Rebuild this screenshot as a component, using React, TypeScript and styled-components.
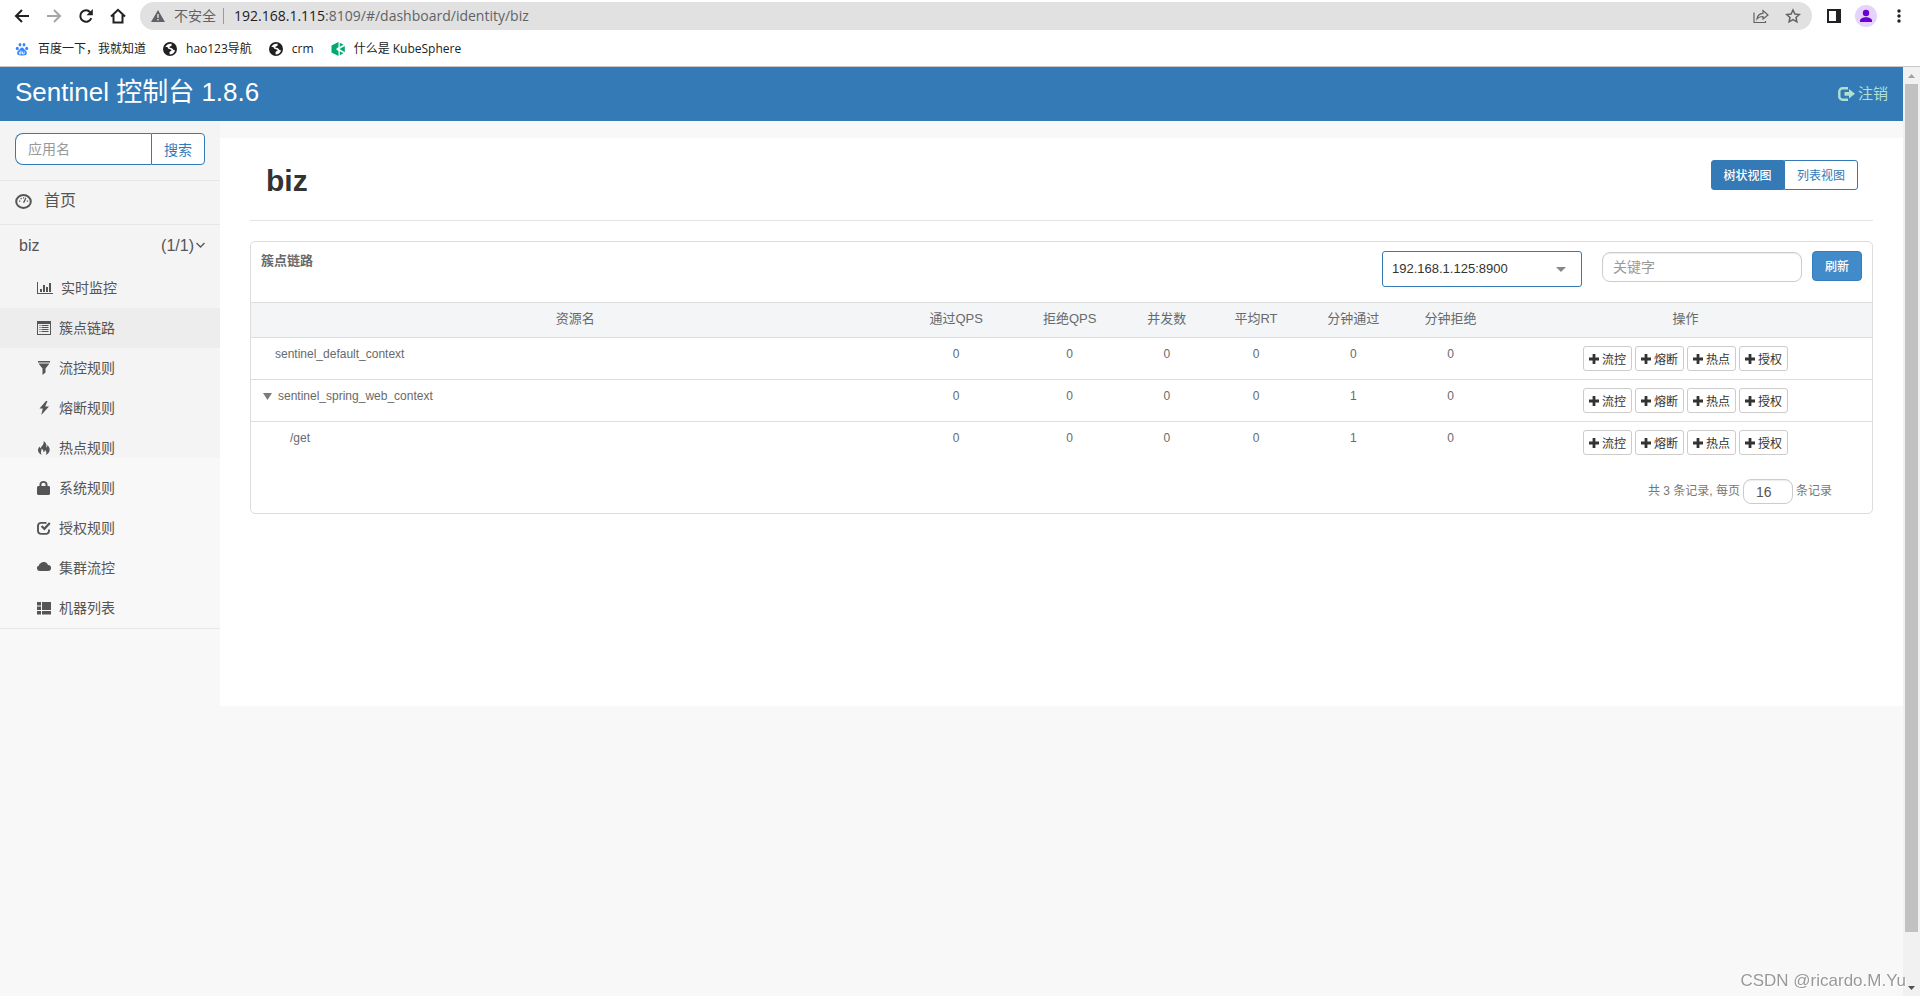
import React from 'react';
import styled, { createGlobalStyle } from 'styled-components';

const GlobalStyle = createGlobalStyle`
  * { box-sizing: border-box; }
  body {
    margin: 0;
    background: #f8f8f8;
    color: #676a6c;
    font-family: "Liberation Sans", "Noto Sans CJK SC", sans-serif;
    font-size: 13px;
    line-height: 20px;
  }
  button, input, select { font-family: inherit; margin: 0; }
  a { color: inherit; text-decoration: none; }
  svg { display: block; flex: none; }
`;

const Screen = styled.div`
  display: flex;
  flex-direction: column;
  min-height: 100vh;
`;

/* ---------- browser chrome ---------- */

const BrowserBar = styled.header`
  background: #fff;
  border-bottom: 1px solid #c8c8c8;
  color: #202124;
  font-family: "Open Sans", "Noto Sans CJK SC", sans-serif;
`;

const NavRow = styled.div`
  display: flex;
  align-items: center;
  height: 32px;
  padding: 0 13px 0 14px;
`;

const NavButtons = styled.div`
  display: flex;
  gap: 16px;
  width: 126px;
`;

const ChromeButton = styled.button`
  display: flex;
  padding: 0;
  border: 0;
  background: none;
  color: #202124;
  &:disabled { color: #a6a6a6; }
`;

const AddressPill = styled.div`
  flex: 1;
  display: flex;
  align-items: center;
  height: 28px;
  padding: 0 11px;
  border-radius: 14px;
  background: #e1e1e1;
  color: #5f6368;
  font-size: 14px;
`;

const Insecure = styled.span`
  margin: 0 7px 0 9px;
  padding-right: 7px;
  border-right: 1px solid #9a9a9a;
  line-height: 16px;
`;

const Url = styled.span`
  flex: 1;
  padding-left: 3px;
  strong { font-weight: 400; color: #202124; }
`;

const PillActions = styled.div`
  display: flex;
  gap: 16px;
  button { color: #5f6368; }
`;

const ToolActions = styled.div`
  display: flex;
  align-items: center;
  gap: 14px;
  padding-left: 15px;
`;

const Bookmarks = styled.nav`
  display: flex;
  align-items: center;
  gap: 17px;
  height: 34px;
  padding: 0 15px;
  font-size: 12px;
`;

const Bookmark = styled.a`
  display: flex;
  align-items: center;
  gap: 9px;
`;

/* ---------- application shell ---------- */

const Viewport = styled.div`
  flex: 1;
  display: flex;
`;

const AppFrame = styled.div`
  flex: 1;
  min-width: 0;
`;

const TopBar = styled.div`
  display: flex;
  align-items: center;
  justify-content: space-between;
  height: 54px;
  padding: 0 15px;
  background: #337ab7;
`;

const Brand = styled.a`
  color: #fff;
  font-size: 26px;
  line-height: 36px;
  padding-bottom: 4px;
`;

const Logout = styled.a`
  display: flex;
  align-items: center;
  gap: 3px;
  color: #b0e0d0;
  font-size: 15px;
`;

const Columns = styled.div`
  display: flex;
  align-items: flex-start;
`;

const Sidebar = styled.aside`
  flex: none;
  width: 220px;
  color: #555;
  background: linear-gradient(#f4f4f4 337px, #f8f8f8 337px);
`;

const SearchForm = styled.form`
  display: flex;
  padding: 12px 15px 15px;
  border-bottom: 1px solid #e7e7e7;
`;

const SearchInput = styled.input`
  flex: 1;
  min-width: 0;
  height: 32px;
  padding: 0 12px;
  border: 1px solid #337ab7;
  border-right: 0;
  border-radius: 8px 0 0 8px;
  background: #fff;
  font-size: 14px;
  &::placeholder { color: #999; }
`;

const SearchButton = styled.button`
  width: 54px;
  height: 32px;
  padding: 0;
  border: 1px solid #337ab7;
  border-radius: 0 4px 4px 0;
  background: #fff;
  color: #337ab7;
  font-size: 14px;
`;

const HomeLink = styled.a`
  display: flex;
  align-items: center;
  gap: 12px;
  height: 44px;
  padding: 0 15px 3px;
  border-bottom: 1px solid #e7e7e7;
  font-size: 16px;
`;

const AppToggle = styled.button`
  display: flex;
  align-items: center;
  gap: 2px;
  width: 100%;
  height: 43px;
  padding: 0 15px 2px 19px;
  border: 0;
  background: none;
  color: #555;
  font-size: 16px;
  span:first-child { flex: 1; text-align: left; }
`;

const Menu = styled.ul`
  margin: 0;
  padding: 0;
  list-style: none;
  border-bottom: 1px solid #e7e7e7;
`;

const MenuLink = styled.a<{ $active?: boolean }>`
  display: flex;
  align-items: center;
  gap: 8px;
  height: 40px;
  padding-left: 37px;
  background: ${(p) => (p.$active ? '#ededed' : 'transparent')};
  font-size: 14px;
`;

const Main = styled.main`
  flex: 1;
  min-width: 0;
  margin-top: 17px;
  padding: 0 30px 192px;
  background: #fff;
`;

const PageHead = styled.div`
  display: flex;
  justify-content: space-between;
  align-items: flex-start;
  height: 83px;
  padding: 22px 15px 0 16px;
  margin-bottom: 20px;
  border-bottom: 1px solid #e3e3e3;
`;

const PageTitle = styled.h1`
  margin: 0;
  color: #333;
  font-size: 30px;
  line-height: 42px;
`;

const ViewSwitch = styled.div`
  display: flex;
`;

const ViewButton = styled.button<{ $active?: boolean }>`
  width: ${(p) => (p.$active ? '73px' : '74px')};
  height: 30px;
  padding: 0 0 2px;
  border: 1px solid #337ab7;
  border-radius: ${(p) => (p.$active ? '3px 0 0 3px' : '0 3px 3px 0')};
  background: ${(p) => (p.$active ? '#337ab7' : '#fff')};
  color: ${(p) => (p.$active ? '#fff' : '#337ab7')};
  font-size: 12px;
  font-weight: ${(p) => (p.$active ? 500 : 400)};
`;

const Card = styled.section`
  border: 1px solid #ddd;
  border-radius: 5px;
`;

const CardHead = styled.div`
  display: flex;
  align-items: flex-start;
  height: 60px;
  padding: 9px 10px 0;
`;

const CardTitle = styled.h2`
  flex: 1;
  margin: 0;
  font-size: 13px;
  line-height: 20px;
`;

const SelectBox = styled.div`
  display: grid;
  width: 200px;
  margin-right: 20px;
  > * { grid-area: 1 / 1; }
  svg { align-self: center; justify-self: end; margin-right: 16px; color: #888; pointer-events: none; }
`;

const MachineSelect = styled.select`
  appearance: none;
  height: 36px;
  padding: 0 9px 2px;
  border: 1px solid #337ab7;
  border-radius: 3px;
  background: #fff;
  color: #333;
  font-size: 13px;
`;

const RoundInput = styled.input<{ $small?: boolean }>`
  width: ${(p) => (p.$small ? '50px' : '200px')};
  height: ${(p) => (p.$small ? '25px' : '30px')};
  margin-top: 1px;
  padding: 0 ${(p) => (p.$small ? '12px' : '10px')};
  border: 1px solid #ccc;
  border-radius: 8px;
  background: #fff;
  box-shadow: inset 0 1px 1px rgba(0, 0, 0, 0.075);
  color: #555;
  font-size: 14px;
  &::placeholder { color: #999; }
`;

const RefreshButton = styled.button`
  width: 50px;
  height: 30px;
  margin-left: 10px;
  padding: 0 0 2px;
  border: 1px solid #357ebd;
  border-radius: 4px;
  background: #428bca;
  color: #fff;
  font-size: 12px;
  font-weight: 500;
`;

const Table = styled.table`
  width: 100%;
  border-collapse: collapse;
  table-layout: fixed;
  text-align: center;
  font-size: 12px;
`;

const HeadCell = styled.th<{ $width: number }>`
  width: ${(p) => p.$width}%;
  height: 35px;
  padding: 0 0 2px;
  border: 1px solid #ddd;
  border-width: 1px 0;
  background: #f3f5f7;
  font-size: 13px;
  font-weight: 400;
`;

const Cell = styled.td`
  height: 42px;
  padding: 6px 0 0;
  vertical-align: top;
  tr + tr > & { border-top: 1px solid #ddd; }
`;

const NameCell = styled(Cell)<{ $indent: number }>`
  padding-left: ${(p) => p.$indent}px;
  text-align: left;
`;

const TreeToggle = styled.button`
  display: flex;
  align-items: center;
  gap: 6px;
  padding: 0;
  border: 0;
  background: none;
  color: inherit;
  font-size: 12px;
  line-height: 20px;
`;

const Actions = styled.div`
  display: flex;
  justify-content: center;
  gap: 3px;
  padding-top: 2px;
`;

const ActionButton = styled.button`
  display: flex;
  align-items: center;
  justify-content: center;
  gap: 3px;
  width: 49px;
  height: 25px;
  padding: 0;
  border: 1px solid #ccc;
  border-radius: 3px;
  background: #fff;
  color: #333;
  font-size: 12px;
`;

const Pager = styled.label`
  display: flex;
  align-items: center;
  justify-content: flex-end;
  gap: 3px;
  height: 49px;
  padding: 6px 40px 0 0;
  color: #777;
  font-size: 12px;
`;

/* ---------- scroll bar and watermark ---------- */

const ScrollTrack = styled.div`
  flex: none;
  display: flex;
  flex-direction: column;
  align-items: center;
  width: 17px;
  background: #f1f1f1;
`;

const ScrollArrow = styled.div`
  display: grid;
  place-items: center;
  height: 17px;
`;

const ScrollThumb = styled.div`
  flex: 848;
  width: 13px;
  background: #c1c1c1;
`;

const ScrollRest = styled.div`
  flex: 47;
`;

const Watermark = styled.div`
  position: fixed;
  right: 14px;
  bottom: 5px;
  color: #999;
  font-size: 17px;
  text-shadow: 1px 1px 0 #fff;
`;

/* ---------- icons ---------- */

type IconProps = { children: React.ReactNode; w?: number; h?: number; box?: string; line?: number };

const Icon = ({ children, w = 14, h = w, box = '0 0 14 14', line }: IconProps) => (
  <svg
    width={w}
    height={h}
    viewBox={box}
    aria-hidden="true"
    fill={line ? 'none' : 'currentColor'}
    stroke={line ? 'currentColor' : 'none'}
    strokeWidth={line}
  >
    {children}
  </svg>
);

const GlobeIcon = () => (
  <Icon>
    <circle cx="7" cy="7" r="7" fill="#202124" />
    <path d="M8.600 1.800C6 1.400 3.500 2.600 2.300 5l2.200.1c.3 1.500 1.300 2.200 3 2.300 1.200.1 1.500.7.6 1.400l-1.600 1.300.2 2.300c2.400-.1 4.600-1.500 5.400-4-.9-.1-1.700-.3-2.200-1.100C9.400 6.200 8.600 5.800 7 5.700c-.9-.1-.9-.9-.1-1.200.9-.3 1.700-.6 1.700-1.300z" fill="#fff" />
  </Icon>
);

const PlusIcon = () => (
  <Icon w={10} box="0 0 10 10">
    <path d="M3.600 0h2.800v3.600H10v2.800H6.400V10H3.600V6.400H0V3.600h3.600z" />
  </Icon>
);

const ChartIcon = () => (
  <Icon w={16} h={14} box="0 0 16 14">
    <path d="M0 1h1v11h15v1H0zM3 8h2v3H3zM6 4h2v7H6zM9 6h2v5H9zM12 2h2v9h-2z" />
  </Icon>
);

const ListIcon = () => (
  <Icon>
    <path fillRule="evenodd" d="M0 0h14v14H0zM1 3v10h12V3zM2.500 4h1v1h-1zM4.500 4h7v1h-7zM2.500 6h1v1h-1zM4.500 6h7v1h-7zM2.500 8h1v1h-1zM4.500 8h7v1h-7zM2.500 10h1v1h-1zM4.500 10h7v1h-7z" />
  </Icon>
);

const FilterIcon = () => (
  <Icon>
    <path d="M1 0h12v1.500H1zM1.500 2.500h11L8.500 7.500v4L5.500 14V7.500z" />
  </Icon>
);

const FlashIcon = () => (
  <Icon>
    <path d="M9 0L2.500 7.500h3.300L4.300 14 12 5.600H8.200L10.500 0z" />
  </Icon>
);

const FireIcon = () => (
  <Icon>
    <path d="M6.600 0c3 2 3.200 4.200 2.600 6.500.8-.4 1.200-1.300 1.100-2.600 2 1.800 2.800 4 2.200 6.100-.5 2-1.900 3.200-3.800 4 1.200-1.900.9-3.600-.7-5-.1 1.200-.6 1.900-1.500 2.300.1-2-.8-3-2-3.900.3 2.300-1.500 3.500.300 6.300C2.500 12.900.8 11.200 1 8.800 1.100 7.600 1.900 6.600 2.600 5.500c.2.900.4 1.400.9 1.800C4.300 4.900 7.400 3.700 6.600 0z" />
  </Icon>
);

const LockIcon = () => (
  <Icon>
    <path fillRule="evenodd" d="M2.500 5V3.500C2.500 1.200 4 0 6.500 0s4 1.200 4 3.500V5H12l1 1v7l-1 1H1l-1-1V6l1-1zM4.500 5h4V3.500c0-1-.7-1.700-2-1.700s-2 .7-2 1.700z" />
  </Icon>
);

const CheckIcon = () => (
  <Icon>
    <path d="M9.500 1.900H4A3 3 0 0 0 1 4.900v5a3 3 0 0 0 3 3h5a3 3 0 0 0 3-3V8.500" fill="none" stroke="currentColor" strokeWidth="1.900" />
    <path d="M3.800 5.700l1.500-1.400 2 2L12 1.300l1.600 1.500-6.200 6.700z" />
  </Icon>
);

const CloudIcon = () => (
  <Icon>
    <path d="M2.800 10a2.800 2.800 0 0 1-.8-5.500 2.300 2.300 0 0 1 1.600-2.200A4.500 4.500 0 0 1 11 4a3 3 0 0 1 .2 6z" />
  </Icon>
);

const GridIcon = () => (
  <Icon>
    <path d="M0 1h4v3.500H0zM0 5.500h4V9H0zM0 10h4v3.500H0zM5 1h9v8H5zM5 10h9v3.500H5z" />
  </Icon>
);

const CaretDown = () => (
  <Icon w={10} h={5} box="0 0 10 5">
    <path d="M0 0h10L5 5z" />
  </Icon>
);

const TreeCaret = () => (
  <Icon w={9} h={8} box="0 0 9 8">
    <path d="M0 1h9L4.500 8z" fill="#7c7c7c" />
  </Icon>
);

/* ---------- data ---------- */

const menu = [
  { label: '实时监控', icon: <ChartIcon /> },
  { label: '簇点链路', icon: <ListIcon />, active: true },
  { label: '流控规则', icon: <FilterIcon /> },
  { label: '熔断规则', icon: <FlashIcon /> },
  { label: '热点规则', icon: <FireIcon /> },
  { label: '系统规则', icon: <LockIcon /> },
  { label: '授权规则', icon: <CheckIcon /> },
  { label: '集群流控', icon: <CloudIcon /> },
  { label: '机器列表', icon: <GridIcon /> },
];

const columns = [
  { label: '资源名', width: 40 },
  { label: '通过QPS', width: 7 },
  { label: '拒绝QPS', width: 7 },
  { label: '并发数', width: 5 },
  { label: '平均RT', width: 6 },
  { label: '分钟通过', width: 6 },
  { label: '分钟拒绝', width: 6 },
  { label: '操作', width: 23 },
];

const rows = [
  { name: 'sentinel_default_context', indent: 24, open: false, values: [0, 0, 0, 0, 0, 0] },
  { name: 'sentinel_spring_web_context', indent: 12, open: true, values: [0, 0, 0, 0, 1, 0] },
  { name: '/get', indent: 39, open: false, values: [0, 0, 0, 0, 1, 0] },
];

const actions = ['流控', '熔断', '热点', '授权'];

/* ---------- page ---------- */

const Browser = () => (
  <BrowserBar>
    <NavRow>
      <NavButtons>
        <ChromeButton aria-label="后退">
          <Icon w={16} box="0 0 16 16" line={2}><path d="M15 8H2.500M8 2L2 8l6 6" /></Icon>
        </ChromeButton>
        <ChromeButton aria-label="前进" disabled>
          <Icon w={16} box="0 0 16 16" line={2}><path d="M1 8h12.500M8 2l6 6-6 6" /></Icon>
        </ChromeButton>
        <ChromeButton aria-label="重新加载">
          <Icon w={16} box="0 0 16 16">
            <path d="M13.300 10.200A5.700 5.700 0 1 1 12.200 4.200" fill="none" stroke="currentColor" strokeWidth="2" />
            <path d="M14.800 1v6.300H8.500z" />
          </Icon>
        </ChromeButton>
        <ChromeButton aria-label="主页">
          <Icon w={16} box="0 0 16 16" line={2}><path d="M1 8.500L8 1.800l7 6.700M3.500 7v7.500h9V7" /></Icon>
        </ChromeButton>
      </NavButtons>
      <AddressPill>
        <Icon w={14} h={12} box="0 0 14 12"><path fillRule="evenodd" d="M7 0l7 12H0zM6.300 4v4h1.400V4zM6.300 9v1.400h1.400V9z" /></Icon>
        <Insecure>不安全</Insecure>
        <Url><strong>192.168.1.115</strong>:8109/#/dashboard/identity/biz</Url>
        <PillActions>
          <ChromeButton aria-label="分享">
            <Icon w={16} box="0 0 16 16" line={1}>
              <path d="M1 4.500v10h11.500V13M4 11c.5-4 2.500-5.500 6-5.700V2.500L15 7l-5 4V8.500C7.500 8.500 5.500 9 4 11z" strokeWidth="1.200" />
            </Icon>
          </ChromeButton>
          <ChromeButton aria-label="加入书签">
            <Icon w={16} box="0 0 16 16" line={1}>
              <path d="M8 2l1.900 4 4.400.5-3.300 3 .9 4.400L8 11.700l-3.900 2.200.9-4.400-3.300-3L6.100 6z" strokeWidth="1.500" />
            </Icon>
          </ChromeButton>
        </PillActions>
      </AddressPill>
      <ToolActions>
        <ChromeButton aria-label="侧边栏">
          <Icon><path fillRule="evenodd" d="M0 0h14v14H0zM2 2v10h7V2z" /></Icon>
        </ChromeButton>
        <ChromeButton aria-label="用户">
          <Icon w={22} box="0 0 22 22">
            <circle cx="11" cy="11" r="11" fill="#e6d3fc" />
            <circle cx="11" cy="8" r="3.200" fill="#6a00d4" />
            <path d="M5 17v-1.500c0-2 3-3.300 6-3.300s6 1.300 6 3.300V17z" fill="#6a00d4" />
          </Icon>
        </ChromeButton>
        <ChromeButton aria-label="菜单">
          <Icon w={16} box="0 0 16 16"><circle cx="8" cy="3" r="1.700" /><circle cx="8" cy="8" r="1.700" /><circle cx="8" cy="13" r="1.700" /></Icon>
        </ChromeButton>
      </ToolActions>
    </NavRow>
    <Bookmarks aria-label="书签">
      <Bookmark href="#baidu">
        <Icon>
          <g fill="#3385ff">
            <ellipse cx="2.300" cy="6.500" rx="1.500" ry="1.800" />
            <ellipse cx="5" cy="2.700" rx="1.400" ry="1.800" />
            <ellipse cx="9" cy="2.700" rx="1.400" ry="1.800" />
            <ellipse cx="11.700" cy="6.500" rx="1.500" ry="1.800" />
            <path d="M7 5.500c1.500 0 2 1.500 3 2.500 1.200 1.100 2 2 1.800 3.600-.3 1.800-1.900 2-4.800 1.900-2.900.1-4.500-.1-4.800-1.900C2 10 2.800 9.100 4 8c1-1 1.500-2.500 3-2.500z" />
          </g>
          <path d="M6 8.500v3.500H4.500v-1.800H6M7.500 9.500v2.500h1.700V9.500" fill="none" stroke="#fff" strokeWidth=".8" />
        </Icon>
        百度一下，我就知道
      </Bookmark>
      <Bookmark href="#hao123"><GlobeIcon />hao123导航</Bookmark>
      <Bookmark href="#crm"><GlobeIcon />crm</Bookmark>
      <Bookmark href="#kubesphere">
        <Icon>
          <path d="M7.500 0v5L5 7l2.500 2.200V14L.5 10.500v-7z" fill="#00a971" />
          <path d="M8.800.8v4L12.500 2.700zM8.800 13.300V9.200l3.700 2.100zM13.800 4v6.200L8.500 7z" fill="#00a971" />
        </Icon>
        什么是 KubeSphere
      </Bookmark>
    </Bookmarks>
  </BrowserBar>
);

const Side = () => (
  <Sidebar>
    <SearchForm onSubmit={(e) => e.preventDefault()}>
      <SearchInput aria-label="应用名" placeholder="应用名" />
      <SearchButton>搜索</SearchButton>
    </SearchForm>
    <HomeLink href="#/dashboard/home">
      <Icon w={17} h={15} box="0 0 17 15">
        <ellipse cx="8.500" cy="7.500" rx="7.300" ry="6.500" fill="none" stroke="currentColor" strokeWidth="2" />
        <path d="M4 6.500h1.300v1.300H4zM5.500 4h1.300v1.300H5.500zM8 3.200h1.200v1.200H8zM11.800 6.500h1.300v1.300h-1.300zM10.500 3.500l.9.400-1.800 4.700-1.500.4.300-1.500z" />
      </Icon>
      首页
    </HomeLink>
    <AppToggle aria-expanded="true">
      <span>biz</span>
      <span>(1/1)</span>
      <Icon w={9} h={10} box="0 0 9 10" line={1}><path d="M.500 2L4.500 6l4-4" strokeWidth="1.300" /></Icon>
    </AppToggle>
    <Menu>
      {menu.map((item) => (
        <li key={item.label}>
          <MenuLink href="#/dashboard" $active={item.active}>
            {item.icon}
            {item.label}
          </MenuLink>
        </li>
      ))}
    </Menu>
  </Sidebar>
);

const ResourceTable = () => (
  <Table>
    <thead>
      <tr>
        {columns.map((c) => (
          <HeadCell key={c.label} $width={c.width}>{c.label}</HeadCell>
        ))}
      </tr>
    </thead>
    <tbody>
      {rows.map((row) => (
        <tr key={row.name}>
          <NameCell $indent={row.indent}>
            {row.open ? (
              <TreeToggle aria-expanded="true">
                <TreeCaret />
                {row.name}
              </TreeToggle>
            ) : row.name}
          </NameCell>
          {row.values.map((v, i) => <Cell key={i}>{v}</Cell>)}
          <Cell>
            <Actions>
              {actions.map((a) => (
                <ActionButton key={a}><PlusIcon />{a}</ActionButton>
              ))}
            </Actions>
          </Cell>
        </tr>
      ))}
    </tbody>
  </Table>
);

export default function App() {
  return (
    <Screen>
      <GlobalStyle />
      <Browser />
      <Viewport>
        <AppFrame>
          <TopBar>
            <Brand href="#/">Sentinel 控制台 1.8.6</Brand>
            <Logout href="#/logout">
              <Icon w={17} h={14} box="0 0 17 14">
                <path d="M10 1.300H4.500A3.200 3.200 0 0 0 1.300 4.500v5a3.200 3.200 0 0 0 3.200 3.200H10" fill="none" stroke="currentColor" strokeWidth="2.400" />
                <path d="M6.500 5H11V2l6 4.700-6 4.800V8.700H6.500z" />
              </Icon>
              注销
            </Logout>
          </TopBar>
          <Columns>
            <Side />
            <Main>
              <PageHead>
                <PageTitle>biz</PageTitle>
                <ViewSwitch>
                  <ViewButton $active>树状视图</ViewButton>
                  <ViewButton>列表视图</ViewButton>
                </ViewSwitch>
              </PageHead>
              <Card>
                <CardHead>
                  <CardTitle>簇点链路</CardTitle>
                  <SelectBox>
                    <MachineSelect aria-label="机器">
                      <option>192.168.1.125:8900</option>
                    </MachineSelect>
                    <CaretDown />
                  </SelectBox>
                  <RoundInput aria-label="关键字" placeholder="关键字" />
                  <RefreshButton>刷新</RefreshButton>
                </CardHead>
                <ResourceTable />
                <Pager>
                  共 3 条记录, 每页
                  <RoundInput $small defaultValue="16" />
                  条记录
                </Pager>
              </Card>
            </Main>
          </Columns>
        </AppFrame>
        <ScrollTrack aria-hidden="true">
          <ScrollArrow>
            <Icon w={7} h={4} box="0 0 7 4"><path d="M0 4h7L3.500 0z" fill="#a3a3a3" /></Icon>
          </ScrollArrow>
          <ScrollThumb />
          <ScrollRest />
          <ScrollArrow>
            <Icon w={7} h={4} box="0 0 7 4"><path d="M0 0h7L3.500 4z" fill="#505050" /></Icon>
          </ScrollArrow>
        </ScrollTrack>
      </Viewport>
      <Watermark>CSDN @ricardo.M.Yu</Watermark>
    </Screen>
  );
}
